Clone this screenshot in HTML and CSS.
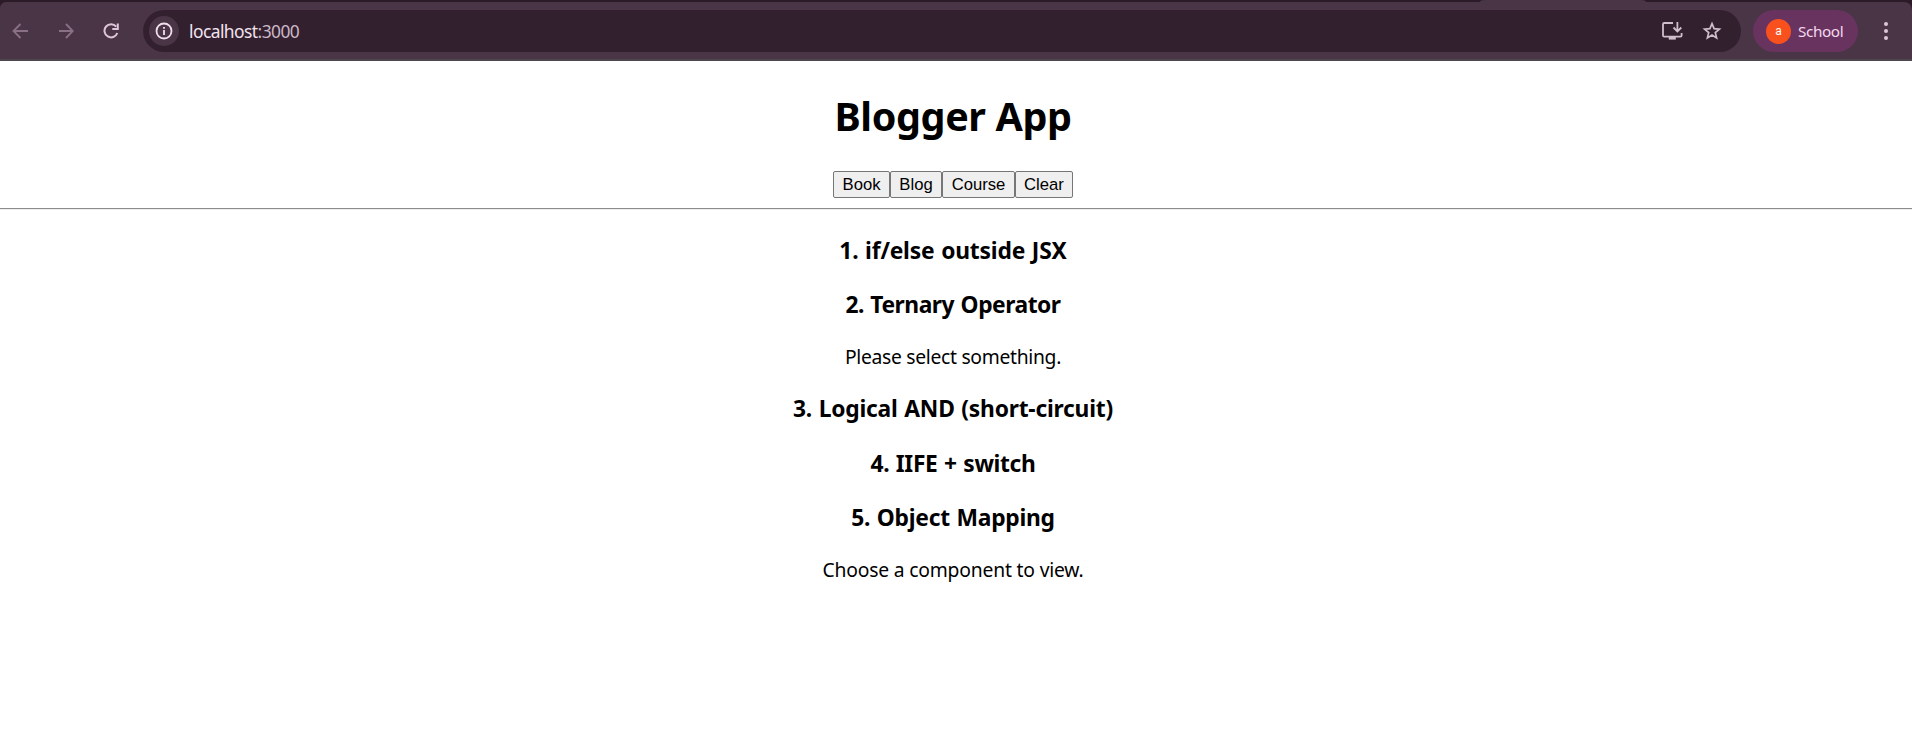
FILE: index.html
```html
<!DOCTYPE html>
<html lang="en">
<head>
<meta charset="utf-8">
<title>Blogger App</title>
<link rel="stylesheet" href="styles.css">
</head>
<body>
<header class="browser">
  <div class="tabstrip"><div class="active-tab"></div></div>
  <div class="toolbar">
    <svg class="nav-icon dim back" viewBox="0 0 16 16"><path d="M16 8H2M8.5 1L1.5 8L8.5 15"/></svg>
    <svg class="nav-icon dim forward" viewBox="0 0 16 16"><path d="M1 8H14.5M8 1L14.8 8L8 15"/></svg>
    <svg class="nav-icon reload" viewBox="0 0 16 16"><path d="M13.2 3.6A6.6 6.6 0 1 0 14.3 10M14.8 .5V6H9.3"/></svg>
    <div class="address">
      <span class="site-info"><svg viewBox="0 0 18 18"><circle cx="9" cy="9" r="7.5"/><path d="M9 8V13M9 5V6.8"/></svg></span>
      <span class="url">localhost<span class="port">:3000</span></span>
      <svg class="install" viewBox="0 0 22 20"><path d="M12 2H3.2Q2 2 2 3.2V14.4Q2 15.6 3.2 15.6H19.4Q20.6 15.6 20.6 14.4V12M16.4 1V10M12.5 6.5L16.4 10.4L20.3 6.5"/><path class="fill" d="M7.8 15H14.8V18.6H7.8Z"/></svg>
      <svg class="star" viewBox="0 0 20 20"><path d="M10 2.7L12.1 7.7L17.4 8.1L13.3 11.6L14.6 16.9L10 14L5.4 16.9L6.7 11.6L2.6 8.1L7.9 7.7Z"/></svg>
    </div>
    <div class="profile"><span class="avatar">a</span><span class="profile-name">School</span></div>
    <svg class="menu" viewBox="0 0 6 20"><circle cx="3" cy="3" r="2"/><circle cx="3" cy="10" r="2"/><circle cx="3" cy="17" r="2"/></svg>
  </div>
</header>
<main class="app">
  <h1>Blogger App</h1>
  <div class="actions">
    <button class="book">Book</button><button class="blog">Blog</button><button class="course">Course</button><button class="clear">Clear</button>
  </div>
  <hr>
  <h3 class="outside">1. if/else outside JSX</h3>
  <h3 class="ternary">2. Ternary Operator</h3>
  <p class="select">Please select something.</p>
  <h3 class="logical">3. Logical AND (short-circuit)</h3>
  <h3 class="iife">4. IIFE + switch</h3>
  <h3 class="mapping">5. Object Mapping</h3>
  <p class="choose">Choose a component to view.</p>
</main>
</body>
</html>
```
FILE: styles.css
```css
* { box-sizing: border-box; }
body {
  margin: 0;
  background: #fff;
  color: #000;
  font-family: "Noto Sans", "Open Sans", sans-serif;
}
svg { display: block; flex: none; fill: none; stroke: currentColor; }

.browser { height: 61px; background: #2b1b29; display: flex; flex-direction: column; }
.tabstrip { height: 2px; padding-left: 1480px; }
.active-tab { width: 166px; height: 2px; background: #4a3546; border-radius: 5px 5px 0 0 / 2px 2px 0 0; }
.toolbar {
  height: 59px;
  padding: 1px 23px 0 12px;
  border-bottom: 2px solid #4d474d;
  border-radius: 6px 8px 0 0;
  background: #4a3546;
  color: #dfc5da;
  display: flex;
  align-items: center;
}
.nav-icon { width: 16px; height: 16px; stroke-width: 1.8; }
.dim { color: #8a7085; }
.forward { margin-left: 30px; }
.reload { margin-left: 29px; stroke-width: 2; }
.address {
  width: 1598px;
  height: 42px;
  margin-left: 24px;
  padding: 0 19px 0 6px;
  border-radius: 21px;
  background: #33202f;
  display: flex;
  align-items: center;
}
.site-info {
  width: 30px;
  height: 30px;
  border-radius: 50%;
  background: #4a3546;
  color: #efe0ec;
  display: grid;
  place-items: center;
}
.site-info svg { width: 18px; height: 18px; stroke-width: 1.8; }
.url { margin-left: 10px; color: #f2e4ef; font-size: 17.4px; letter-spacing: -.55px; white-space: nowrap; }
.port { color: #cbb8c7; }
.install { width: 22px; height: 20px; margin-left: auto; color: #d0becb; stroke-width: 1.8; }
.install .fill { fill: currentColor; stroke: none; }
.star { width: 20px; height: 20px; margin-left: 19px; color: #d0becb; stroke-width: 1.7; }
.profile {
  width: 105px;
  height: 42px;
  margin-left: 12px;
  padding-left: 13px;
  border-radius: 21px;
  background: #693360;
  display: flex;
  align-items: center;
}
.avatar {
  width: 25px;
  height: 25px;
  border-radius: 50%;
  background: #f9511d;
  color: #fff;
  font: 12px/24px Roboto, sans-serif;
  text-align: center;
}
.profile-name { margin-left: 7px; color: #f5d8ef; font-size: 15.3px; letter-spacing: -.4px; }
.menu { width: 6px; height: 20px; margin-left: auto; fill: currentColor; stroke: none; }

.app { text-align: center; }
h1, h3, p { margin: 0; padding-right: 6px; white-space: nowrap; }
h1 { padding-top: 29px; font-size: 39.5px; line-height: 53px; letter-spacing: -.4px; }
.actions { margin-top: 28px; padding-right: 6px; display: flex; justify-content: center; }
button {
  height: 27px;
  padding: 0;
  border: 1px solid #767676;
  border-radius: 2px;
  background: #efefef;
  color: #000;
  font: 16.667px "Liberation Sans", Arial, sans-serif;
}
.book { width: 57px; }
.blog { width: 52px; }
.course { width: 73px; }
.clear { width: 58px; }
hr { height: 2px; margin: 10px 0 0; border: 0; border-top: 1px solid #8c8c8c; border-bottom: 1px solid #eee; }
h3 { margin-top: 23.4px; font-size: 22.8px; line-height: 31px; letter-spacing: -.4px; word-spacing: 1px; }
.outside { margin-top: 24.6px; letter-spacing: -.18px; }
.ternary { letter-spacing: -.47px; }
.logical { letter-spacing: -.22px; }
.iife { letter-spacing: -.35px; }
.mapping { letter-spacing: -.25px; }
p { margin-top: 23px; font-size: 19.3px; line-height: 27px; letter-spacing: -.3px; }
.choose { letter-spacing: -.18px; }
```
